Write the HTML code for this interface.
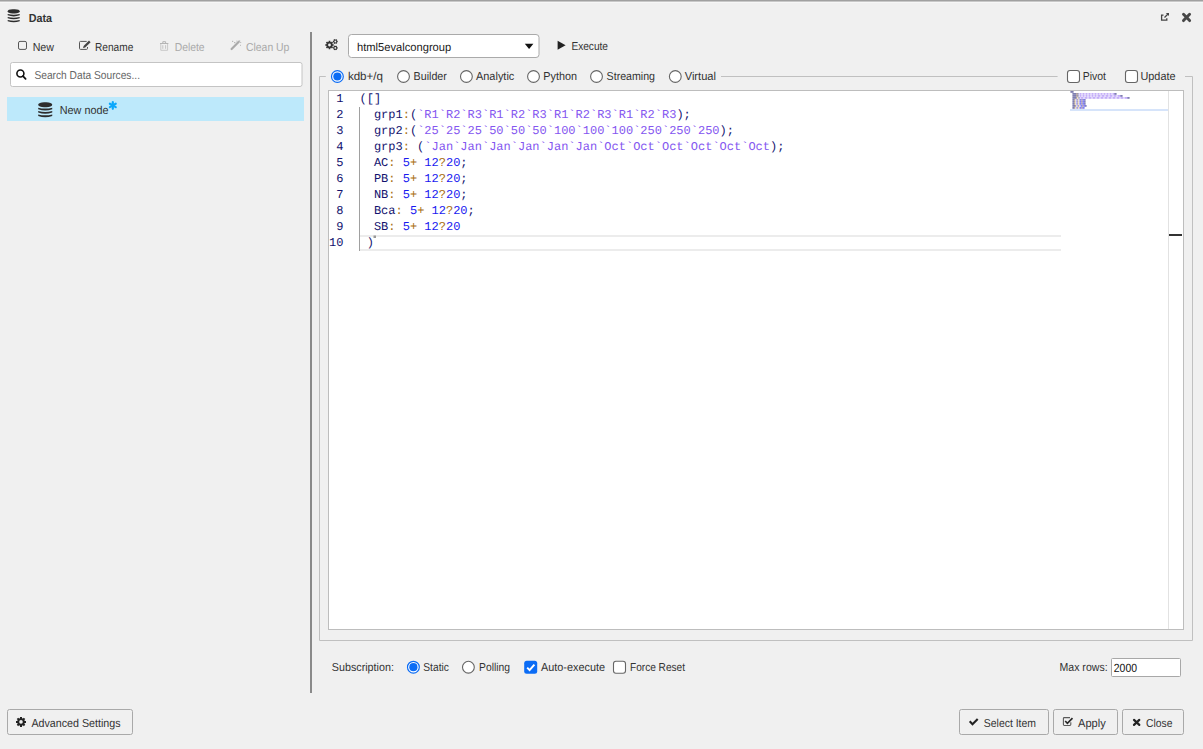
<!DOCTYPE html>
<html><head><meta charset="utf-8"><title>Data</title>
<style>html,body{margin:0;padding:0;background:#f0f0f0;overflow:hidden;width:1203px;height:749px}svg{display:block}text{text-rendering:geometricPrecision}</style>
</head><body>
<svg width="1203" height="749" viewBox="0 0 1203 749"><rect x="0" y="0" width="1203" height="749" rx="0" fill="#f0f0f0" />
<rect x="0" y="0" width="1203" height="1" rx="0" fill="#a0a0a0" />
<rect x="0" y="1" width="1203" height="1" rx="0" fill="#c8c8c8" />
<rect x="0" y="2" width="1203" height="1" rx="0" fill="#f6f6f6" />
<g transform="translate(7.7,9.2) scale(1.0,1.0)" fill="#2d2d2d"><rect x="0" y="0" width="12" height="4.3" rx="5" ry="2.15"/><path d="M0,4.8 Q6,6.3 12,4.8 L12,6.1 Q6,8.3 0,6.1 Z"/><path d="M0,7.75 Q6,9.25 12,7.75 L12,9.05 Q6,11.25 0,9.05 Z"/><path d="M0,10.7 Q6,12.2 12,10.7 L12,12.0 Q6,14.2 0,12.0 Z"/></g>
<text x="28.70" y="22" font-family="'Liberation Sans', sans-serif" font-size="11.6" fill="#333" font-weight="bold" textLength="23.30" lengthAdjust="spacingAndGlyphs" >Data</text>
<g fill="none" stroke="#444" stroke-width="1.3"><path d="M1163.5,15.2 H1161.6 V20.2 H1166.8 V18.2"/><path d="M1164.5,17.5 L1168.5,13.5"/></g>
<path d="M1165.8,12.9 H1169 V16.1 Z" fill="#444"/>
<g stroke="#474747" stroke-width="2.9" stroke-linecap="round"><line x1="1183.5" y1="14.3" x2="1189.6" y2="20.6"/><line x1="1189.6" y1="14.3" x2="1183.5" y2="20.6"/></g>
<rect x="18.5" y="41.4" width="8" height="8" rx="1.5" fill="none" stroke="#555" stroke-width="1" />
<text x="32.70" y="50.8" font-family="'Liberation Sans', sans-serif" font-size="11.5" fill="#333" textLength="21.30" lengthAdjust="spacingAndGlyphs" >New</text>
<path d="M86.7,41.4 H80.5 Q79.5,41.4 79.5,42.4 V48.4 Q79.5,49.4 80.5,49.4 H86.5 Q87.5,49.4 87.5,48.4 V47" fill="none" stroke="#555" stroke-width="1"/>
<path d="M83,48 L83.6,46 L89,40.6 L90.6,42.2 L85.2,47.6 Z" fill="#444"/>
<text x="95.00" y="50.8" font-family="'Liberation Sans', sans-serif" font-size="11.5" fill="#333" textLength="38.30" lengthAdjust="spacingAndGlyphs" >Rename</text>
<g fill="none" stroke="#b4b4b4" stroke-width="1"><path d="M160,43.5 H168.4"/><path d="M162.8,43.5 V41.7 H165.6 V43.5"/><path d="M160.8,44 V50.3 H167.6 V44" stroke="#c8c8c8"/><path d="M162.8,45.2 V48.8 M165.6,45.2 V48.8" stroke="#c4c4c4"/></g>
<text x="174.70" y="50.8" font-family="'Liberation Sans', sans-serif" font-size="11.5" fill="#aaa" textLength="29.90" lengthAdjust="spacingAndGlyphs" >Delete</text>
<path d="M231.6,49 L238.8,41.8" stroke="#aaa" stroke-width="2.2" stroke-linecap="round"/>
<g fill="#b8b8b8"><rect x="232" y="40.8" width="1.2" height="1.2"/><rect x="234" y="42" width="1.4" height="1.2"/><rect x="236.4" y="40.6" width="1" height="1"/><rect x="238.6" y="40.4" width="1.6" height="1.2"/><rect x="240.2" y="42" width="1" height="1"/><rect x="240" y="44.8" width="1" height="1"/></g>
<text x="246.00" y="50.8" font-family="'Liberation Sans', sans-serif" font-size="11.5" fill="#aaa" textLength="43.40" lengthAdjust="spacingAndGlyphs" >Clean Up</text>
<rect x="10.5" y="62.5" width="291.5" height="24" rx="2" fill="#fff" stroke="#c4c4c4" stroke-width="1" />
<circle cx="20.4" cy="73.5" r="3.5" fill="none" stroke="#111" stroke-width="1.6"/>
<line x1="23" y1="76.2" x2="25.6" y2="78.8" stroke="#111" stroke-width="1.8" stroke-linecap="round"/>
<text x="34.40" y="78.9" font-family="'Liberation Sans', sans-serif" font-size="11.5" fill="#666" textLength="105.60" lengthAdjust="spacingAndGlyphs" >Search Data Sources...</text>
<rect x="7" y="97" width="297" height="24" rx="0" fill="#bde9fb" />
<g transform="translate(38.2,102.2) scale(1.17,1.15)" fill="#2d2d2d"><rect x="0" y="0" width="12" height="4.3" rx="5" ry="2.15"/><path d="M0,4.8 Q6,6.3 12,4.8 L12,6.1 Q6,8.3 0,6.1 Z"/><path d="M0,7.75 Q6,9.25 12,7.75 L12,9.05 Q6,11.25 0,9.05 Z"/><path d="M0,10.7 Q6,12.2 12,10.7 L12,12.0 Q6,14.2 0,12.0 Z"/></g>
<text x="59.80" y="114" font-family="'Liberation Sans', sans-serif" font-size="11.5" fill="#333" textLength="48.70" lengthAdjust="spacingAndGlyphs" >New node</text>
<g stroke="#0ba8fb" stroke-width="2.2" stroke-linecap="round"><line x1="112.80" y1="102.00" x2="112.80" y2="108.80"/><line x1="109.86" y1="103.70" x2="115.74" y2="107.10"/><line x1="109.86" y1="107.10" x2="115.74" y2="103.70"/></g>
<rect x="310" y="32" width="2" height="661" rx="0" fill="#8a8a8a" />
<path d="M332.69,44.15 L333.71,44.15 L333.71,45.85 L332.69,45.85 L332.35,46.66 L333.08,47.38 L331.88,48.58 L331.16,47.85 L330.35,48.19 L330.35,49.21 L328.65,49.21 L328.65,48.19 L327.84,47.85 L327.12,48.58 L325.92,47.38 L326.65,46.66 L326.31,45.85 L325.29,45.85 L325.29,44.15 L326.31,44.15 L326.65,43.34 L325.92,42.62 L327.12,41.42 L327.84,42.15 L328.65,41.81 L328.65,40.79 L330.35,40.79 L330.35,41.81 L331.16,42.15 L331.88,41.42 L333.08,42.62 L332.35,43.34 Z M330.9,45 A1.4,1.4 0 1,0 328.1,45 A1.4,1.4 0 1,0 330.9,45 Z" fill="#333" fill-rule="evenodd"/>
<path d="M336.96,40.80 L337.69,40.76 L337.69,42.24 L336.96,42.20 L336.74,42.59 L337.13,43.20 L335.85,43.94 L335.52,43.29 L335.08,43.29 L334.75,43.94 L333.47,43.20 L333.86,42.59 L333.64,42.20 L332.91,42.24 L332.91,40.76 L333.64,40.80 L333.86,40.41 L333.47,39.80 L334.75,39.06 L335.08,39.71 L335.52,39.71 L335.85,39.06 L337.13,39.80 L336.74,40.41 Z M336.2,41.5 A0.9,0.9 0 1,0 334.40000000000003,41.5 A0.9,0.9 0 1,0 336.2,41.5 Z" fill="#333" fill-rule="evenodd"/>
<path d="M336.96,47.20 L337.69,47.16 L337.69,48.64 L336.96,48.60 L336.74,48.99 L337.13,49.60 L335.85,50.34 L335.52,49.69 L335.08,49.69 L334.75,50.34 L333.47,49.60 L333.86,48.99 L333.64,48.60 L332.91,48.64 L332.91,47.16 L333.64,47.20 L333.86,46.81 L333.47,46.20 L334.75,45.46 L335.08,46.11 L335.52,46.11 L335.85,45.46 L337.13,46.20 L336.74,46.81 Z M336.2,47.9 A0.9,0.9 0 1,0 334.40000000000003,47.9 A0.9,0.9 0 1,0 336.2,47.9 Z" fill="#333" fill-rule="evenodd"/>
<rect x="348.5" y="34.5" width="190.5" height="23" rx="3" fill="#fff" stroke="#aaa" stroke-width="1" />
<text x="357.00" y="50.9" font-family="'Liberation Sans', sans-serif" font-size="11.5" fill="#222" textLength="94.20" lengthAdjust="spacingAndGlyphs" >html5evalcongroup</text>
<path d="M524.8,43.8 H533.4 L529.1,49 Z" fill="#111"/>
<path d="M557.6,40.8 L565.6,45.3 L557.6,49.8 Z" fill="#222"/>
<text x="571.40" y="50.2" font-family="'Liberation Sans', sans-serif" font-size="11.5" fill="#333" textLength="36.60" lengthAdjust="spacingAndGlyphs" >Execute</text>
<path d="M325.8,76.5 H319.5 V640.5 H1192.5 V76.5 H1185" fill="none" stroke="#c0c0c0" stroke-width="1"/>
<line x1="721" y1="76.5" x2="1057.6" y2="76.5" stroke="#c0c0c0" stroke-width="1" />
<circle cx="337.4" cy="76.5" r="5.9" fill="#fff" stroke="#0b6cf5" stroke-width="1.2"/>
<circle cx="337.4" cy="76.5" r="4.1" fill="#0b6cf5"/>
<text x="347.90" y="80" font-family="'Liberation Sans', sans-serif" font-size="11.5" fill="#333" textLength="35.10" lengthAdjust="spacingAndGlyphs" >kdb+/q</text>
<circle cx="403.5" cy="76.5" r="5.9" fill="#fff" stroke="#666" stroke-width="1.1"/>
<text x="413.60" y="80" font-family="'Liberation Sans', sans-serif" font-size="11.5" fill="#333" textLength="33.30" lengthAdjust="spacingAndGlyphs" >Builder</text>
<circle cx="466.4" cy="76.5" r="5.9" fill="#fff" stroke="#666" stroke-width="1.1"/>
<text x="476.00" y="80" font-family="'Liberation Sans', sans-serif" font-size="11.5" fill="#333" textLength="38.30" lengthAdjust="spacingAndGlyphs" >Analytic</text>
<circle cx="533.5" cy="76.5" r="5.9" fill="#fff" stroke="#666" stroke-width="1.1"/>
<text x="543.30" y="80" font-family="'Liberation Sans', sans-serif" font-size="11.5" fill="#333" textLength="33.70" lengthAdjust="spacingAndGlyphs" >Python</text>
<circle cx="596.5" cy="76.5" r="5.9" fill="#fff" stroke="#666" stroke-width="1.1"/>
<text x="606.60" y="80" font-family="'Liberation Sans', sans-serif" font-size="11.5" fill="#333" textLength="48.40" lengthAdjust="spacingAndGlyphs" >Streaming</text>
<circle cx="675.3" cy="76.5" r="5.9" fill="#fff" stroke="#666" stroke-width="1.1"/>
<text x="684.70" y="80" font-family="'Liberation Sans', sans-serif" font-size="11.5" fill="#333" textLength="31.30" lengthAdjust="spacingAndGlyphs" >Virtual</text>
<rect x="1067.5" y="70.5" width="12" height="12" rx="2.5" fill="#fff" stroke="#666" stroke-width="1.1" />
<text x="1082.70" y="80" font-family="'Liberation Sans', sans-serif" font-size="11.5" fill="#333" textLength="23.30" lengthAdjust="spacingAndGlyphs" >Pivot</text>
<rect x="1125.5" y="70.5" width="12" height="12" rx="2.5" fill="#fff" stroke="#666" stroke-width="1.1" />
<text x="1140.50" y="80" font-family="'Liberation Sans', sans-serif" font-size="11.5" fill="#333" textLength="35.00" lengthAdjust="spacingAndGlyphs" >Update</text>
<rect x="328.5" y="90.5" width="855" height="539" rx="0" fill="#fff" stroke="#bdbdbd" stroke-width="1" />
<line x1="1168.5" y1="91" x2="1168.5" y2="629" stroke="#e2e2e2" stroke-width="1" />
<rect x="1169" y="234" width="13" height="2" rx="0" fill="#333" />
<rect x="360" y="235" width="701" height="2" rx="0" fill="#ececec" />
<rect x="360" y="249" width="701" height="2" rx="0" fill="#ececec" />
<rect x="359" y="107" width="1" height="144" rx="0" fill="#a0a0a0" />
<text x="336.30" y="102" font-family="'Liberation Mono', monospace" font-size="12" fill="#12126e">1</text>
<text x="359.50" y="102" font-family="'Liberation Mono', monospace" font-size="12" xml:space="preserve"><tspan fill="#12126e">([]</tspan></text>
<rect x="1070.5" y="91" width="1" height="1.8" fill="#12126e" opacity="0.65"/>
<rect x="1071.5" y="91" width="1" height="1.8" fill="#12126e" opacity="0.65"/>
<rect x="1072.5" y="91" width="1" height="1.8" fill="#12126e" opacity="0.65"/>
<text x="336.30" y="118" font-family="'Liberation Mono', monospace" font-size="12" fill="#12126e">2</text>
<text x="359.50" y="118" font-family="'Liberation Mono', monospace" font-size="12" xml:space="preserve"><tspan fill="#12126e">  grp1</tspan><tspan fill="#a86e10">:</tspan><tspan fill="#12126e">(</tspan><tspan fill="#8456f0">`R1`R2`R3`R1`R2`R3`R1`R2`R3`R1`R2`R3</tspan><tspan fill="#12126e">);</tspan></text>
<rect x="1072.5" y="93" width="1" height="1.8" fill="#12126e" opacity="0.65"/>
<rect x="1073.5" y="93" width="1" height="1.8" fill="#12126e" opacity="0.65"/>
<rect x="1074.5" y="93" width="1" height="1.8" fill="#12126e" opacity="0.65"/>
<rect x="1075.5" y="93" width="1" height="1.8" fill="#12126e" opacity="0.65"/>
<rect x="1076.5" y="93" width="1" height="1.8" fill="#a86e10" opacity="0.5"/>
<rect x="1077.5" y="93" width="1" height="1.8" fill="#12126e" opacity="0.65"/>
<rect x="1079.5" y="93" width="1" height="1.8" fill="#8456f0" opacity="0.55"/>
<rect x="1080.5" y="93" width="1" height="1.8" fill="#8456f0" opacity="0.55"/>
<rect x="1082.5" y="93" width="1" height="1.8" fill="#8456f0" opacity="0.55"/>
<rect x="1083.5" y="93" width="1" height="1.8" fill="#8456f0" opacity="0.55"/>
<rect x="1085.5" y="93" width="1" height="1.8" fill="#8456f0" opacity="0.55"/>
<rect x="1086.5" y="93" width="1" height="1.8" fill="#8456f0" opacity="0.55"/>
<rect x="1088.5" y="93" width="1" height="1.8" fill="#8456f0" opacity="0.55"/>
<rect x="1089.5" y="93" width="1" height="1.8" fill="#8456f0" opacity="0.55"/>
<rect x="1091.5" y="93" width="1" height="1.8" fill="#8456f0" opacity="0.55"/>
<rect x="1092.5" y="93" width="1" height="1.8" fill="#8456f0" opacity="0.55"/>
<rect x="1094.5" y="93" width="1" height="1.8" fill="#8456f0" opacity="0.55"/>
<rect x="1095.5" y="93" width="1" height="1.8" fill="#8456f0" opacity="0.55"/>
<rect x="1097.5" y="93" width="1" height="1.8" fill="#8456f0" opacity="0.55"/>
<rect x="1098.5" y="93" width="1" height="1.8" fill="#8456f0" opacity="0.55"/>
<rect x="1100.5" y="93" width="1" height="1.8" fill="#8456f0" opacity="0.55"/>
<rect x="1101.5" y="93" width="1" height="1.8" fill="#8456f0" opacity="0.55"/>
<rect x="1103.5" y="93" width="1" height="1.8" fill="#8456f0" opacity="0.55"/>
<rect x="1104.5" y="93" width="1" height="1.8" fill="#8456f0" opacity="0.55"/>
<rect x="1106.5" y="93" width="1" height="1.8" fill="#8456f0" opacity="0.55"/>
<rect x="1107.5" y="93" width="1" height="1.8" fill="#8456f0" opacity="0.55"/>
<rect x="1109.5" y="93" width="1" height="1.8" fill="#8456f0" opacity="0.55"/>
<rect x="1110.5" y="93" width="1" height="1.8" fill="#8456f0" opacity="0.55"/>
<rect x="1112.5" y="93" width="1" height="1.8" fill="#8456f0" opacity="0.55"/>
<rect x="1113.5" y="93" width="1" height="1.8" fill="#8456f0" opacity="0.55"/>
<rect x="1114.5" y="93" width="1" height="1.8" fill="#12126e" opacity="0.65"/>
<rect x="1115.5" y="93" width="1" height="1.8" fill="#12126e" opacity="0.65"/>
<text x="336.30" y="134" font-family="'Liberation Mono', monospace" font-size="12" fill="#12126e">3</text>
<text x="359.50" y="134" font-family="'Liberation Mono', monospace" font-size="12" xml:space="preserve"><tspan fill="#12126e">  grp2</tspan><tspan fill="#a86e10">:</tspan><tspan fill="#12126e">(</tspan><tspan fill="#8456f0">`25`25`25`50`50`50`100`100`100`250`250`250</tspan><tspan fill="#12126e">);</tspan></text>
<rect x="1072.5" y="95" width="1" height="1.8" fill="#12126e" opacity="0.65"/>
<rect x="1073.5" y="95" width="1" height="1.8" fill="#12126e" opacity="0.65"/>
<rect x="1074.5" y="95" width="1" height="1.8" fill="#12126e" opacity="0.65"/>
<rect x="1075.5" y="95" width="1" height="1.8" fill="#12126e" opacity="0.65"/>
<rect x="1076.5" y="95" width="1" height="1.8" fill="#a86e10" opacity="0.5"/>
<rect x="1077.5" y="95" width="1" height="1.8" fill="#12126e" opacity="0.65"/>
<rect x="1079.5" y="95" width="1" height="1.8" fill="#8456f0" opacity="0.55"/>
<rect x="1080.5" y="95" width="1" height="1.8" fill="#8456f0" opacity="0.55"/>
<rect x="1082.5" y="95" width="1" height="1.8" fill="#8456f0" opacity="0.55"/>
<rect x="1083.5" y="95" width="1" height="1.8" fill="#8456f0" opacity="0.55"/>
<rect x="1085.5" y="95" width="1" height="1.8" fill="#8456f0" opacity="0.55"/>
<rect x="1086.5" y="95" width="1" height="1.8" fill="#8456f0" opacity="0.55"/>
<rect x="1088.5" y="95" width="1" height="1.8" fill="#8456f0" opacity="0.55"/>
<rect x="1089.5" y="95" width="1" height="1.8" fill="#8456f0" opacity="0.55"/>
<rect x="1091.5" y="95" width="1" height="1.8" fill="#8456f0" opacity="0.55"/>
<rect x="1092.5" y="95" width="1" height="1.8" fill="#8456f0" opacity="0.55"/>
<rect x="1094.5" y="95" width="1" height="1.8" fill="#8456f0" opacity="0.55"/>
<rect x="1095.5" y="95" width="1" height="1.8" fill="#8456f0" opacity="0.55"/>
<rect x="1097.5" y="95" width="1" height="1.8" fill="#8456f0" opacity="0.55"/>
<rect x="1098.5" y="95" width="1" height="1.8" fill="#8456f0" opacity="0.55"/>
<rect x="1099.5" y="95" width="1" height="1.8" fill="#8456f0" opacity="0.55"/>
<rect x="1101.5" y="95" width="1" height="1.8" fill="#8456f0" opacity="0.55"/>
<rect x="1102.5" y="95" width="1" height="1.8" fill="#8456f0" opacity="0.55"/>
<rect x="1103.5" y="95" width="1" height="1.8" fill="#8456f0" opacity="0.55"/>
<rect x="1105.5" y="95" width="1" height="1.8" fill="#8456f0" opacity="0.55"/>
<rect x="1106.5" y="95" width="1" height="1.8" fill="#8456f0" opacity="0.55"/>
<rect x="1107.5" y="95" width="1" height="1.8" fill="#8456f0" opacity="0.55"/>
<rect x="1109.5" y="95" width="1" height="1.8" fill="#8456f0" opacity="0.55"/>
<rect x="1110.5" y="95" width="1" height="1.8" fill="#8456f0" opacity="0.55"/>
<rect x="1111.5" y="95" width="1" height="1.8" fill="#8456f0" opacity="0.55"/>
<rect x="1113.5" y="95" width="1" height="1.8" fill="#8456f0" opacity="0.55"/>
<rect x="1114.5" y="95" width="1" height="1.8" fill="#8456f0" opacity="0.55"/>
<rect x="1115.5" y="95" width="1" height="1.8" fill="#8456f0" opacity="0.55"/>
<rect x="1117.5" y="95" width="1" height="1.8" fill="#8456f0" opacity="0.55"/>
<rect x="1118.5" y="95" width="1" height="1.8" fill="#8456f0" opacity="0.55"/>
<rect x="1119.5" y="95" width="1" height="1.8" fill="#8456f0" opacity="0.55"/>
<rect x="1120.5" y="95" width="1" height="1.8" fill="#12126e" opacity="0.65"/>
<rect x="1121.5" y="95" width="1" height="1.8" fill="#12126e" opacity="0.65"/>
<text x="336.30" y="150" font-family="'Liberation Mono', monospace" font-size="12" fill="#12126e">4</text>
<text x="359.50" y="150" font-family="'Liberation Mono', monospace" font-size="12" xml:space="preserve"><tspan fill="#12126e">  grp3</tspan><tspan fill="#a86e10">:</tspan><tspan fill="#12126e"> (</tspan><tspan fill="#8456f0">`Jan`Jan`Jan`Jan`Jan`Jan`Oct`Oct`Oct`Oct`Oct`Oct</tspan><tspan fill="#12126e">);</tspan></text>
<rect x="1072.5" y="97" width="1" height="1.8" fill="#12126e" opacity="0.65"/>
<rect x="1073.5" y="97" width="1" height="1.8" fill="#12126e" opacity="0.65"/>
<rect x="1074.5" y="97" width="1" height="1.8" fill="#12126e" opacity="0.65"/>
<rect x="1075.5" y="97" width="1" height="1.8" fill="#12126e" opacity="0.65"/>
<rect x="1076.5" y="97" width="1" height="1.8" fill="#a86e10" opacity="0.5"/>
<rect x="1078.5" y="97" width="1" height="1.8" fill="#12126e" opacity="0.65"/>
<rect x="1080.5" y="97" width="1" height="1.8" fill="#8456f0" opacity="0.55"/>
<rect x="1081.5" y="97" width="1" height="1.8" fill="#8456f0" opacity="0.55"/>
<rect x="1082.5" y="97" width="1" height="1.8" fill="#8456f0" opacity="0.55"/>
<rect x="1084.5" y="97" width="1" height="1.8" fill="#8456f0" opacity="0.55"/>
<rect x="1085.5" y="97" width="1" height="1.8" fill="#8456f0" opacity="0.55"/>
<rect x="1086.5" y="97" width="1" height="1.8" fill="#8456f0" opacity="0.55"/>
<rect x="1088.5" y="97" width="1" height="1.8" fill="#8456f0" opacity="0.55"/>
<rect x="1089.5" y="97" width="1" height="1.8" fill="#8456f0" opacity="0.55"/>
<rect x="1090.5" y="97" width="1" height="1.8" fill="#8456f0" opacity="0.55"/>
<rect x="1092.5" y="97" width="1" height="1.8" fill="#8456f0" opacity="0.55"/>
<rect x="1093.5" y="97" width="1" height="1.8" fill="#8456f0" opacity="0.55"/>
<rect x="1094.5" y="97" width="1" height="1.8" fill="#8456f0" opacity="0.55"/>
<rect x="1096.5" y="97" width="1" height="1.8" fill="#8456f0" opacity="0.55"/>
<rect x="1097.5" y="97" width="1" height="1.8" fill="#8456f0" opacity="0.55"/>
<rect x="1098.5" y="97" width="1" height="1.8" fill="#8456f0" opacity="0.55"/>
<rect x="1100.5" y="97" width="1" height="1.8" fill="#8456f0" opacity="0.55"/>
<rect x="1101.5" y="97" width="1" height="1.8" fill="#8456f0" opacity="0.55"/>
<rect x="1102.5" y="97" width="1" height="1.8" fill="#8456f0" opacity="0.55"/>
<rect x="1104.5" y="97" width="1" height="1.8" fill="#8456f0" opacity="0.55"/>
<rect x="1105.5" y="97" width="1" height="1.8" fill="#8456f0" opacity="0.55"/>
<rect x="1106.5" y="97" width="1" height="1.8" fill="#8456f0" opacity="0.55"/>
<rect x="1108.5" y="97" width="1" height="1.8" fill="#8456f0" opacity="0.55"/>
<rect x="1109.5" y="97" width="1" height="1.8" fill="#8456f0" opacity="0.55"/>
<rect x="1110.5" y="97" width="1" height="1.8" fill="#8456f0" opacity="0.55"/>
<rect x="1112.5" y="97" width="1" height="1.8" fill="#8456f0" opacity="0.55"/>
<rect x="1113.5" y="97" width="1" height="1.8" fill="#8456f0" opacity="0.55"/>
<rect x="1114.5" y="97" width="1" height="1.8" fill="#8456f0" opacity="0.55"/>
<rect x="1116.5" y="97" width="1" height="1.8" fill="#8456f0" opacity="0.55"/>
<rect x="1117.5" y="97" width="1" height="1.8" fill="#8456f0" opacity="0.55"/>
<rect x="1118.5" y="97" width="1" height="1.8" fill="#8456f0" opacity="0.55"/>
<rect x="1120.5" y="97" width="1" height="1.8" fill="#8456f0" opacity="0.55"/>
<rect x="1121.5" y="97" width="1" height="1.8" fill="#8456f0" opacity="0.55"/>
<rect x="1122.5" y="97" width="1" height="1.8" fill="#8456f0" opacity="0.55"/>
<rect x="1124.5" y="97" width="1" height="1.8" fill="#8456f0" opacity="0.55"/>
<rect x="1125.5" y="97" width="1" height="1.8" fill="#8456f0" opacity="0.55"/>
<rect x="1126.5" y="97" width="1" height="1.8" fill="#8456f0" opacity="0.55"/>
<rect x="1127.5" y="97" width="1" height="1.8" fill="#12126e" opacity="0.65"/>
<rect x="1128.5" y="97" width="1" height="1.8" fill="#12126e" opacity="0.65"/>
<text x="336.30" y="166" font-family="'Liberation Mono', monospace" font-size="12" fill="#12126e">5</text>
<text x="359.50" y="166" font-family="'Liberation Mono', monospace" font-size="12" xml:space="preserve"><tspan fill="#12126e">  AC</tspan><tspan fill="#a86e10">:</tspan><tspan fill="#12126e"> </tspan><tspan fill="#1a1af0">5</tspan><tspan fill="#a86e10">+</tspan><tspan fill="#12126e"> </tspan><tspan fill="#1a1af0">12</tspan><tspan fill="#a86e10">?</tspan><tspan fill="#1a1af0">20</tspan><tspan fill="#12126e">;</tspan></text>
<rect x="1072.5" y="99" width="1" height="1.8" fill="#12126e" opacity="0.65"/>
<rect x="1073.5" y="99" width="1" height="1.8" fill="#12126e" opacity="0.65"/>
<rect x="1074.5" y="99" width="1" height="1.8" fill="#a86e10" opacity="0.5"/>
<rect x="1076.5" y="99" width="1" height="1.8" fill="#1a1af0" opacity="0.65"/>
<rect x="1077.5" y="99" width="1" height="1.8" fill="#a86e10" opacity="0.5"/>
<rect x="1079.5" y="99" width="1" height="1.8" fill="#1a1af0" opacity="0.65"/>
<rect x="1080.5" y="99" width="1" height="1.8" fill="#1a1af0" opacity="0.65"/>
<rect x="1081.5" y="99" width="1" height="1.8" fill="#a86e10" opacity="0.5"/>
<rect x="1082.5" y="99" width="1" height="1.8" fill="#1a1af0" opacity="0.65"/>
<rect x="1083.5" y="99" width="1" height="1.8" fill="#1a1af0" opacity="0.65"/>
<rect x="1084.5" y="99" width="1" height="1.8" fill="#12126e" opacity="0.65"/>
<text x="336.30" y="182" font-family="'Liberation Mono', monospace" font-size="12" fill="#12126e">6</text>
<text x="359.50" y="182" font-family="'Liberation Mono', monospace" font-size="12" xml:space="preserve"><tspan fill="#12126e">  PB</tspan><tspan fill="#a86e10">:</tspan><tspan fill="#12126e"> </tspan><tspan fill="#1a1af0">5</tspan><tspan fill="#a86e10">+</tspan><tspan fill="#12126e"> </tspan><tspan fill="#1a1af0">12</tspan><tspan fill="#a86e10">?</tspan><tspan fill="#1a1af0">20</tspan><tspan fill="#12126e">;</tspan></text>
<rect x="1072.5" y="101" width="1" height="1.8" fill="#12126e" opacity="0.65"/>
<rect x="1073.5" y="101" width="1" height="1.8" fill="#12126e" opacity="0.65"/>
<rect x="1074.5" y="101" width="1" height="1.8" fill="#a86e10" opacity="0.5"/>
<rect x="1076.5" y="101" width="1" height="1.8" fill="#1a1af0" opacity="0.65"/>
<rect x="1077.5" y="101" width="1" height="1.8" fill="#a86e10" opacity="0.5"/>
<rect x="1079.5" y="101" width="1" height="1.8" fill="#1a1af0" opacity="0.65"/>
<rect x="1080.5" y="101" width="1" height="1.8" fill="#1a1af0" opacity="0.65"/>
<rect x="1081.5" y="101" width="1" height="1.8" fill="#a86e10" opacity="0.5"/>
<rect x="1082.5" y="101" width="1" height="1.8" fill="#1a1af0" opacity="0.65"/>
<rect x="1083.5" y="101" width="1" height="1.8" fill="#1a1af0" opacity="0.65"/>
<rect x="1084.5" y="101" width="1" height="1.8" fill="#12126e" opacity="0.65"/>
<text x="336.30" y="198" font-family="'Liberation Mono', monospace" font-size="12" fill="#12126e">7</text>
<text x="359.50" y="198" font-family="'Liberation Mono', monospace" font-size="12" xml:space="preserve"><tspan fill="#12126e">  NB</tspan><tspan fill="#a86e10">:</tspan><tspan fill="#12126e"> </tspan><tspan fill="#1a1af0">5</tspan><tspan fill="#a86e10">+</tspan><tspan fill="#12126e"> </tspan><tspan fill="#1a1af0">12</tspan><tspan fill="#a86e10">?</tspan><tspan fill="#1a1af0">20</tspan><tspan fill="#12126e">;</tspan></text>
<rect x="1072.5" y="103" width="1" height="1.8" fill="#12126e" opacity="0.65"/>
<rect x="1073.5" y="103" width="1" height="1.8" fill="#12126e" opacity="0.65"/>
<rect x="1074.5" y="103" width="1" height="1.8" fill="#a86e10" opacity="0.5"/>
<rect x="1076.5" y="103" width="1" height="1.8" fill="#1a1af0" opacity="0.65"/>
<rect x="1077.5" y="103" width="1" height="1.8" fill="#a86e10" opacity="0.5"/>
<rect x="1079.5" y="103" width="1" height="1.8" fill="#1a1af0" opacity="0.65"/>
<rect x="1080.5" y="103" width="1" height="1.8" fill="#1a1af0" opacity="0.65"/>
<rect x="1081.5" y="103" width="1" height="1.8" fill="#a86e10" opacity="0.5"/>
<rect x="1082.5" y="103" width="1" height="1.8" fill="#1a1af0" opacity="0.65"/>
<rect x="1083.5" y="103" width="1" height="1.8" fill="#1a1af0" opacity="0.65"/>
<rect x="1084.5" y="103" width="1" height="1.8" fill="#12126e" opacity="0.65"/>
<text x="336.30" y="214" font-family="'Liberation Mono', monospace" font-size="12" fill="#12126e">8</text>
<text x="359.50" y="214" font-family="'Liberation Mono', monospace" font-size="12" xml:space="preserve"><tspan fill="#12126e">  Bca</tspan><tspan fill="#a86e10">:</tspan><tspan fill="#12126e"> </tspan><tspan fill="#1a1af0">5</tspan><tspan fill="#a86e10">+</tspan><tspan fill="#12126e"> </tspan><tspan fill="#1a1af0">12</tspan><tspan fill="#a86e10">?</tspan><tspan fill="#1a1af0">20</tspan><tspan fill="#12126e">;</tspan></text>
<rect x="1072.5" y="105" width="1" height="1.8" fill="#12126e" opacity="0.65"/>
<rect x="1073.5" y="105" width="1" height="1.8" fill="#12126e" opacity="0.65"/>
<rect x="1074.5" y="105" width="1" height="1.8" fill="#12126e" opacity="0.65"/>
<rect x="1075.5" y="105" width="1" height="1.8" fill="#a86e10" opacity="0.5"/>
<rect x="1077.5" y="105" width="1" height="1.8" fill="#1a1af0" opacity="0.65"/>
<rect x="1078.5" y="105" width="1" height="1.8" fill="#a86e10" opacity="0.5"/>
<rect x="1080.5" y="105" width="1" height="1.8" fill="#1a1af0" opacity="0.65"/>
<rect x="1081.5" y="105" width="1" height="1.8" fill="#1a1af0" opacity="0.65"/>
<rect x="1082.5" y="105" width="1" height="1.8" fill="#a86e10" opacity="0.5"/>
<rect x="1083.5" y="105" width="1" height="1.8" fill="#1a1af0" opacity="0.65"/>
<rect x="1084.5" y="105" width="1" height="1.8" fill="#1a1af0" opacity="0.65"/>
<rect x="1085.5" y="105" width="1" height="1.8" fill="#12126e" opacity="0.65"/>
<text x="336.30" y="230" font-family="'Liberation Mono', monospace" font-size="12" fill="#12126e">9</text>
<text x="359.50" y="230" font-family="'Liberation Mono', monospace" font-size="12" xml:space="preserve"><tspan fill="#12126e">  SB</tspan><tspan fill="#a86e10">:</tspan><tspan fill="#12126e"> </tspan><tspan fill="#1a1af0">5</tspan><tspan fill="#a86e10">+</tspan><tspan fill="#12126e"> </tspan><tspan fill="#1a1af0">12</tspan><tspan fill="#a86e10">?</tspan><tspan fill="#1a1af0">20</tspan></text>
<rect x="1072.5" y="107" width="1" height="1.8" fill="#12126e" opacity="0.65"/>
<rect x="1073.5" y="107" width="1" height="1.8" fill="#12126e" opacity="0.65"/>
<rect x="1074.5" y="107" width="1" height="1.8" fill="#a86e10" opacity="0.5"/>
<rect x="1076.5" y="107" width="1" height="1.8" fill="#1a1af0" opacity="0.65"/>
<rect x="1077.5" y="107" width="1" height="1.8" fill="#a86e10" opacity="0.5"/>
<rect x="1079.5" y="107" width="1" height="1.8" fill="#1a1af0" opacity="0.65"/>
<rect x="1080.5" y="107" width="1" height="1.8" fill="#1a1af0" opacity="0.65"/>
<rect x="1081.5" y="107" width="1" height="1.8" fill="#a86e10" opacity="0.5"/>
<rect x="1082.5" y="107" width="1" height="1.8" fill="#1a1af0" opacity="0.65"/>
<rect x="1083.5" y="107" width="1" height="1.8" fill="#1a1af0" opacity="0.65"/>
<text x="329.10" y="246" font-family="'Liberation Mono', monospace" font-size="12" fill="#12126e">10</text>
<text x="359.50" y="246" font-family="'Liberation Mono', monospace" font-size="12" xml:space="preserve"><tspan fill="#12126e"> )</tspan></text>
<rect x="1071.5" y="109" width="1" height="1.8" fill="#12126e" opacity="0.65"/>
<rect x="1070" y="109" width="98" height="2" rx="0" fill="#d6e4fa" />
<rect x="373.5" y="235.5" width="2.5" height="2.5" rx="0" fill="#999" />
<text x="331.80" y="670.8" font-family="'Liberation Sans', sans-serif" font-size="11.5" fill="#333" textLength="62.10" lengthAdjust="spacingAndGlyphs" >Subscription:</text>
<circle cx="413.4" cy="667.2" r="5.9" fill="#fff" stroke="#0b6cf5" stroke-width="1.2"/>
<circle cx="413.4" cy="667.2" r="4.1" fill="#0b6cf5"/>
<text x="423.30" y="670.8" font-family="'Liberation Sans', sans-serif" font-size="11.5" fill="#333" textLength="25.60" lengthAdjust="spacingAndGlyphs" >Static</text>
<circle cx="468.4" cy="667.2" r="5.9" fill="#fff" stroke="#666" stroke-width="1.1"/>
<text x="479.00" y="670.8" font-family="'Liberation Sans', sans-serif" font-size="11.5" fill="#333" textLength="31.00" lengthAdjust="spacingAndGlyphs" >Polling</text>
<rect x="524.2" y="660.8" width="13" height="13" rx="2.5" fill="#0b6cf5" />
<path d="M527.2,667.5999999999999 L529.6,670.0999999999999 L534.4000000000001,664.5999999999999" fill="none" stroke="#fff" stroke-width="2"/>
<text x="541.00" y="670.8" font-family="'Liberation Sans', sans-serif" font-size="11.5" fill="#333" textLength="64.00" lengthAdjust="spacingAndGlyphs" >Auto-execute</text>
<rect x="613.5" y="661.3" width="12" height="12" rx="2.5" fill="#fff" stroke="#666" stroke-width="1.1" />
<text x="630.00" y="670.8" font-family="'Liberation Sans', sans-serif" font-size="11.5" fill="#333" textLength="55.00" lengthAdjust="spacingAndGlyphs" >Force Reset</text>
<text x="1059.50" y="671" font-family="'Liberation Sans', sans-serif" font-size="11.5" fill="#333" textLength="48.10" lengthAdjust="spacingAndGlyphs" >Max rows:</text>
<rect x="1111.5" y="658.5" width="69" height="18" rx="1" fill="#fff" stroke="#a8a8a8" stroke-width="1" />
<text x="1113.80" y="671.9" font-family="'Liberation Sans', sans-serif" font-size="11.8" fill="#111" textLength="23.20" lengthAdjust="spacingAndGlyphs" >2000</text>
<rect x="7.5" y="709.5" width="125" height="25" rx="2" fill="#f0f0f0" stroke="#a9a9a9" stroke-width="1" />
<path d="M24.77,720.90 L26.00,720.89 L26.00,722.91 L24.77,722.90 L24.37,723.86 L25.25,724.72 L23.82,726.15 L22.96,725.27 L22.00,725.67 L22.01,726.90 L19.99,726.90 L20.00,725.67 L19.04,725.27 L18.18,726.15 L16.75,724.72 L17.63,723.86 L17.23,722.90 L16.00,722.91 L16.00,720.89 L17.23,720.90 L17.63,719.94 L16.75,719.08 L18.18,717.65 L19.04,718.53 L20.00,718.13 L19.99,716.90 L22.01,716.90 L22.00,718.13 L22.96,718.53 L23.82,717.65 L25.25,719.08 L24.37,719.94 Z M22.8,721.9 A1.8,1.8 0 1,0 19.2,721.9 A1.8,1.8 0 1,0 22.8,721.9 Z" fill="#222" fill-rule="evenodd"/>
<text x="31.40" y="726.8" font-family="'Liberation Sans', sans-serif" font-size="11.5" fill="#333" textLength="89.10" lengthAdjust="spacingAndGlyphs" >Advanced Settings</text>
<rect x="959.5" y="709.5" width="89" height="25" rx="2" fill="#f0f0f0" stroke="#a9a9a9" stroke-width="1" />
<path d="M969.7,721.3 L972.5,724.2 L977.7,719" fill="none" stroke="#222" stroke-width="2.1"/>
<text x="983.80" y="727" font-family="'Liberation Sans', sans-serif" font-size="11.5" fill="#333" textLength="52.20" lengthAdjust="spacingAndGlyphs" >Select Item</text>
<rect x="1053.5" y="709.5" width="64" height="25" rx="2" fill="#f0f0f0" stroke="#a9a9a9" stroke-width="1" />
<path d="M1070,717.6 H1064.3 Q1063.4,717.6 1063.4,718.5 V724.6 Q1063.4,725.5 1064.3,725.5 H1069.9 Q1070.8,725.5 1070.8,724.6 V722.2" fill="none" stroke="#5a5a5a" stroke-width="1.1"/>
<path d="M1065.2,721 L1067.4,723.3 L1072.5,718.2" fill="none" stroke="#2a2a2a" stroke-width="1.7"/>
<text x="1078.00" y="727" font-family="'Liberation Sans', sans-serif" font-size="11.5" fill="#333" textLength="27.70" lengthAdjust="spacingAndGlyphs" >Apply</text>
<rect x="1122.5" y="709.5" width="61" height="25" rx="2" fill="#f0f0f0" stroke="#a9a9a9" stroke-width="1" />
<g stroke="#222" stroke-width="2.2" stroke-linecap="round"><line x1="1134" y1="719.9" x2="1139.3" y2="724.9"/><line x1="1139.3" y1="719.9" x2="1134" y2="724.9"/></g>
<text x="1146.00" y="727" font-family="'Liberation Sans', sans-serif" font-size="11.5" fill="#333" textLength="26.40" lengthAdjust="spacingAndGlyphs" >Close</text></svg>
</body></html>
